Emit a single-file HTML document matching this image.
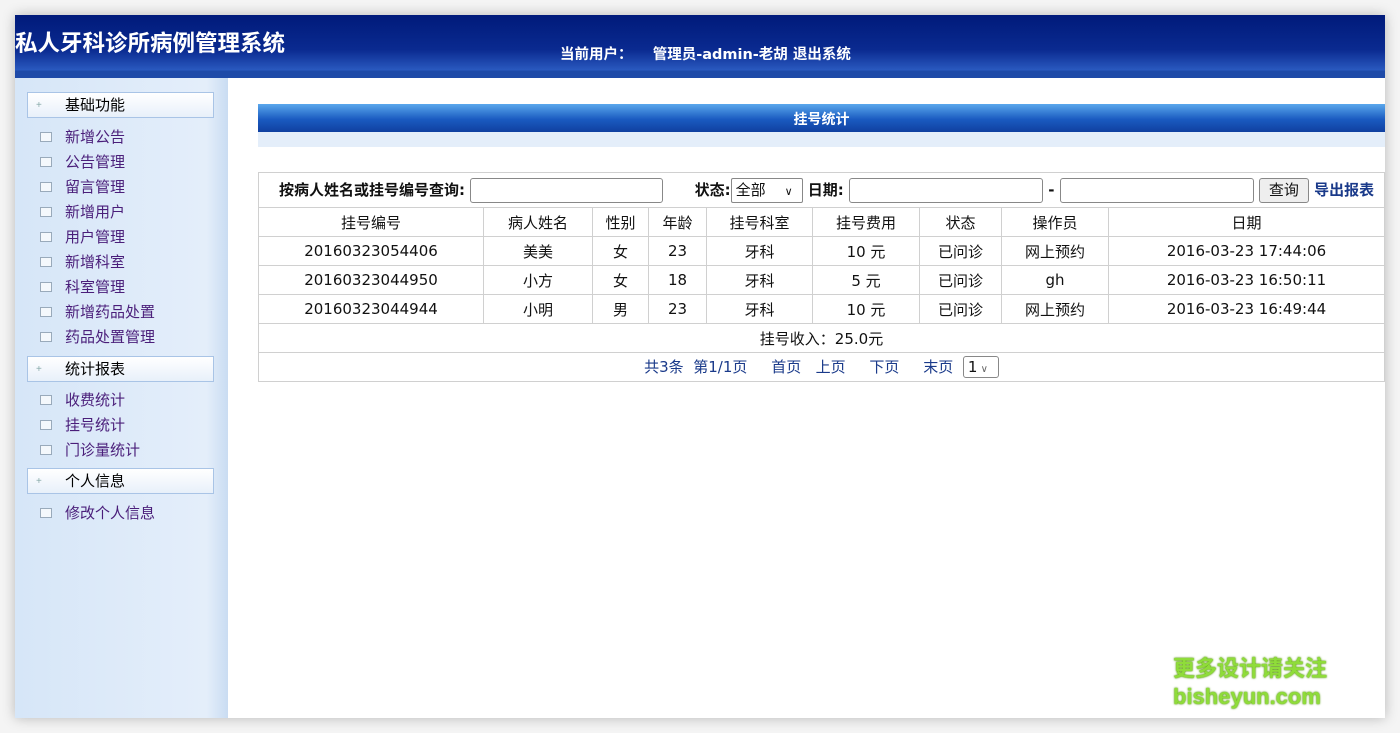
<!DOCTYPE html>
<html><head><meta charset="utf-8"><style>
*{margin:0;padding:0;box-sizing:border-box}
body{width:1400px;height:733px;background:#f4f4f4;font-family:"Liberation Sans","Noto Sans CJK SC",sans-serif;position:relative;overflow:hidden}
#win{position:absolute;left:15px;top:15px;width:1370px;height:703px;background:#fff;box-shadow:0 0 12px rgba(0,0,0,.25)}
#hd{position:absolute;left:0;top:0;width:1370px;height:63px;background:linear-gradient(#001a7a 0%,#0a2a90 55%,#2a5ac0 88%,#1e4aa8 88%,#1e4aa8 100%)}
#hd .t{position:absolute;left:0;top:11px;color:#fff;font-size:22.5px;font-weight:bold}
#hd .u{position:absolute;left:545px;top:28px;color:#fff;font-size:14.5px;font-weight:bold;font-family:"DejaVu Sans","Noto Sans CJK SC",sans-serif}
#sb{position:absolute;left:0;top:63px;width:213px;height:640px;background:linear-gradient(90deg,#d6e6f8,#e4eefa 90%,#c9dcf2)}
.g{position:absolute;left:12px;width:187px;height:26px;border:1px solid #a9c4e6;background:linear-gradient(#fff,#e8f0fa);font-size:15px;color:#000;padding-left:37px;line-height:25px}
.g:before{content:"+";position:absolute;left:8px;top:0;font-size:10px;color:#8aa}
.i{position:absolute;left:50px;font-size:15px;color:#4a1e7a}
.i:before{content:"";position:absolute;left:-25px;top:6px;width:10px;height:8px;border:1px solid #9ab;background:#f4f8fc}
#ban{position:absolute;left:243px;top:89px;width:1127px;height:43px}
#ban .a{height:28px;background:linear-gradient(#5aa8ec,#1a5ac0 55%,#1040a0);color:#fff;font-weight:bold;font-size:14px;text-align:center;line-height:30px}
#ban .b{height:15px;background:#e4eefa}
table{position:absolute;left:243px;top:157px;width:1127px;border-collapse:collapse;font-size:15px;font-family:"DejaVu Sans","Noto Sans CJK SC",sans-serif}
td{border:1px solid #d0d0d0;text-align:center;height:29px;color:#111}
.s td{height:35px}
.inp{display:inline-block;border:1px solid #888;border-radius:3px;height:25px;vertical-align:middle;background:#fff}
a{color:#1a3a8a;text-decoration:none}
</style></head><body>
<div id="win">
<div id="hd"><div class="t">私人牙科诊所病例管理系统</div><div class="u">当前用户：&nbsp;&nbsp;&nbsp;&nbsp;管理员-admin-老胡 退出系统</div></div>
<div id="sb">
<div class="g" style="top:14px">基础功能</div>
<div class="i" style="top:48px">新增公告</div>
<div class="i" style="top:73px">公告管理</div>
<div class="i" style="top:98px">留言管理</div>
<div class="i" style="top:123px">新增用户</div>
<div class="i" style="top:148px">用户管理</div>
<div class="i" style="top:173px">新增科室</div>
<div class="i" style="top:198px">科室管理</div>
<div class="i" style="top:223px">新增药品处置</div>
<div class="i" style="top:248px">药品处置管理</div>
<div class="g" style="top:278px">统计报表</div>
<div class="i" style="top:311px">收费统计</div>
<div class="i" style="top:336px">挂号统计</div>
<div class="i" style="top:361px">门诊量统计</div>
<div class="g" style="top:390px">个人信息</div>
<div class="i" style="top:424px">修改个人信息</div>
</div>
<div id="ban"><div class="a">挂号统计</div><div class="b"></div></div>
<table>
<tr class="s"><td colspan="9" style="text-align:left;padding-left:20px;font-weight:bold;font-size:15px">按病人姓名或挂号编号查询: <span class="inp" style="width:193px"></span>&nbsp;&nbsp;&nbsp;&nbsp;&nbsp; 状态:<span class="inp" style="width:72px;font-weight:normal;padding-left:4px;line-height:23px;border-radius:2px">全部 &nbsp;&nbsp;&nbsp;<span style="font-size:11px">∨</span></span> 日期: <span class="inp" style="width:194px"></span> - <span class="inp" style="width:194px"></span> <span class="inp" style="width:50px;background:#eee;font-weight:normal;text-align:center;line-height:23px">查询</span> <a>导出报表</a></td></tr>
<tr><td style="width:225px">挂号编号</td><td style="width:109px">病人姓名</td><td style="width:56px">性别</td><td style="width:58px">年龄</td><td style="width:106px">挂号科室</td><td style="width:107px">挂号费用</td><td style="width:82px">状态</td><td style="width:107px">操作员</td><td>日期</td></tr>
<tr><td>20160323054406</td><td>美美</td><td>女</td><td>23</td><td>牙科</td><td>10 元</td><td>已问诊</td><td>网上预约</td><td>2016-03-23 17:44:06</td></tr>
<tr><td>20160323044950</td><td>小方</td><td>女</td><td>18</td><td>牙科</td><td>5 元</td><td>已问诊</td><td>gh</td><td>2016-03-23 16:50:11</td></tr>
<tr><td>20160323044944</td><td>小明</td><td>男</td><td>23</td><td>牙科</td><td>10 元</td><td>已问诊</td><td>网上预约</td><td>2016-03-23 16:49:44</td></tr>
<tr><td colspan="9">挂号收入：25.0元</td></tr>
<tr><td colspan="9"><a>共3条</a>&nbsp; <a>第1/1页</a>&nbsp;&nbsp;&nbsp;&nbsp; <a>首页</a>&nbsp;&nbsp; <a>上页</a>&nbsp;&nbsp;&nbsp;&nbsp; <a>下页</a>&nbsp;&nbsp;&nbsp;&nbsp; <a>末页</a>&nbsp; <span class="inp" style="width:36px;height:22px;line-height:20px;text-align:left;padding-left:4px">1<span style="font-size:10px;color:#666"> ∨</span></span></td></tr>
</table>
<div style="position:absolute;left:1158px;top:640px;color:#8fdc3a;font-weight:bold;font-size:22px;line-height:28px;text-shadow:0 0 2px #5a9a10,0 0 1px #5a9a10">更多设计请关注<br>bisheyun.com</div>
</div>
</body></html>
